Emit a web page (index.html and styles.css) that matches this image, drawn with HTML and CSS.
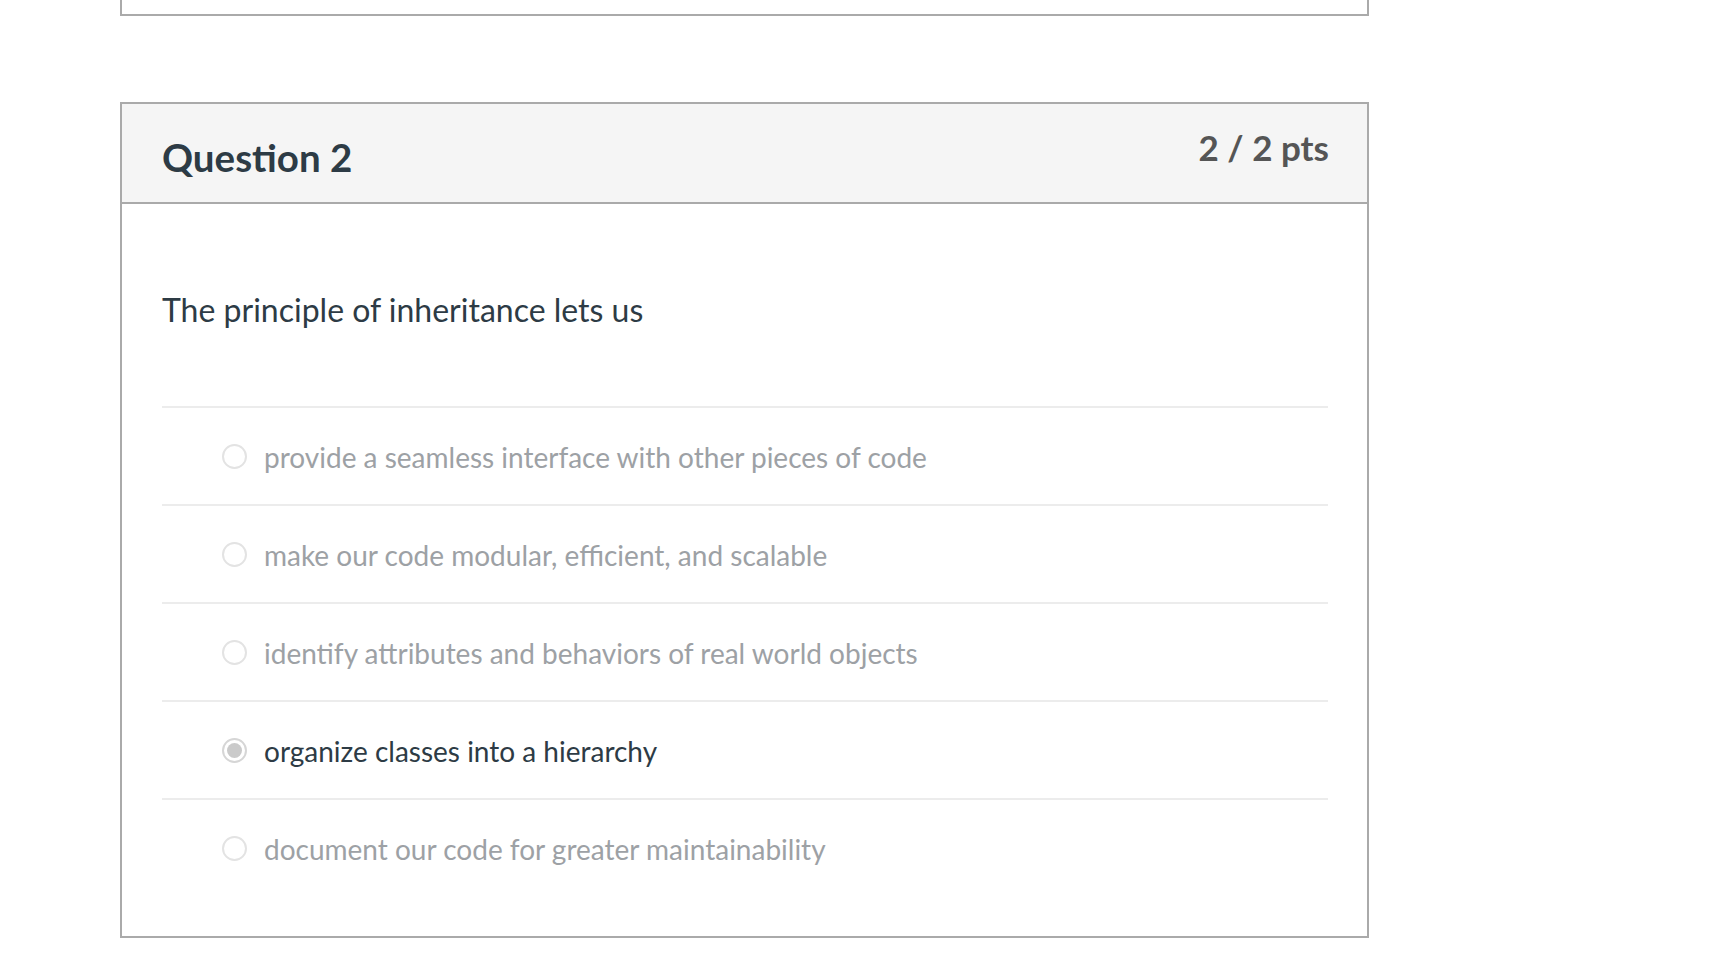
FILE: index.html
```html
<!DOCTYPE html>
<html lang="en">
<head>
<meta charset="utf-8">
<title>Quiz question</title>
<link rel="stylesheet" href="styles.css">
</head>
<body>
<div class="page">
  <div class="prev-card"></div>
  <div class="question">
    <div class="q-header">
      <h2 class="q-name">Question 2</h2>
      <div class="q-points">2 / 2 pts</div>
    </div>
    <div class="q-body">
      <p class="q-text">The principle of inheritance lets us</p>
      <ul class="answers">
        <li class="answer dim"><span class="radio"></span><span class="label">provide a seamless interface with other pieces of code</span></li>
        <li class="answer dim"><span class="radio"></span><span class="label">make our code modular, efficient, and scalable</span></li>
        <li class="answer dim"><span class="radio"></span><span class="label">identify attributes and behaviors of real world objects</span></li>
        <li class="answer selected"><span class="radio checked"></span><span class="label">organize classes into a hierarchy</span></li>
        <li class="answer dim"><span class="radio"></span><span class="label">document our code for greater maintainability</span></li>
      </ul>
    </div>
  </div>
</div>
</body>
</html>
```
FILE: styles.css
```css
* { box-sizing: border-box; }
html, body { margin: 0; padding: 0; background: #fff; }
body { font-family: Lato, "Open Sans", sans-serif; color: #2d3b45; }

.page { padding-left: 120px; width: 1369px; }

.prev-card {
  height: 16px;
  border: 2px solid #aaa;
  border-top: none;
  margin-bottom: 86px;
}

.question { border: 2px solid #aaa; }

.q-header {
  display: flex;
  justify-content: space-between;
  align-items: flex-start;
  background: #f5f5f5;
  border-bottom: 2px solid #aaa;
  height: 100px;
  padding: 0 38px 0 40px;
}
.q-name {
  margin: 0;
  padding-top: 23px;
  font-size: 38.5px;
  line-height: 60px;
  font-weight: 700;
  color: #2d3b45;
}
.q-points {
  padding-top: 18px;
  font-size: 35px;
  line-height: 50px;
  font-weight: 700;
  color: #555;
}

.q-body { padding: 0 39px 40px 40px; }
.q-text {
  margin: 0;
  padding-top: 81px;
  height: 202px;
  font-size: 32px;
  line-height: 50px;
}

.answers { list-style: none; margin: 0; padding: 0; }
.answer {
  display: flex;
  align-items: center;
  height: 98px;
  border-top: 2px solid #ececec;
  padding-left: 60px;
  padding-top: 2px;
  font-size: 28px;
}
.answer.dim { color: #9da1a5; }
.answer.selected { color: #2d3b45; }
.radio {
  width: 25px;
  height: 25px;
  border-radius: 50%;
  border: 2px solid #e3e3e3;
  background: #fff;
  margin-right: 17px;
  margin-top: -2px;
  flex: none;
  display: flex;
  align-items: center;
  justify-content: center;
}
.radio.checked { border: 2px solid #d6d6d6; }
.radio.checked::after {
  content: "";
  width: 15px;
  height: 15px;
  border-radius: 50%;
  background: #cacaca;
}
```
